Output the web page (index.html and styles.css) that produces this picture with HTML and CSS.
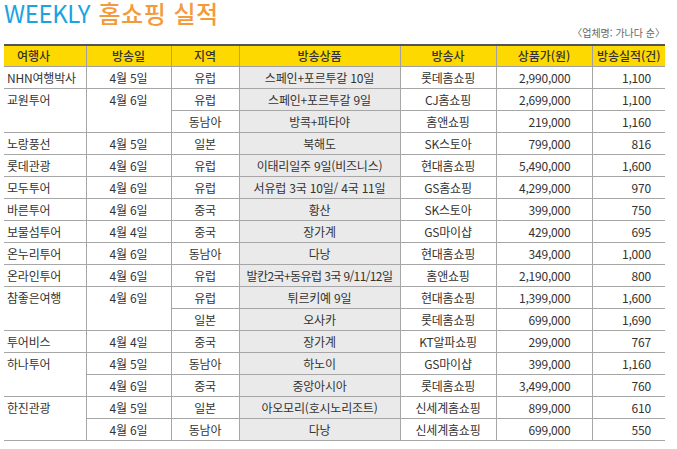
FILE: index.html
```html
<!DOCTYPE html>
<html lang="ko">
<head>
<meta charset="utf-8">
<link rel="stylesheet" href="styles.css">
</head>
<body>
<div class="page">
  <h1 class="title"><span class="en">WEEKLY</span> <span class="ko">홈쇼핑 실적</span></h1>
  <div class="note">〈업체명: 가나다 순〉</div>
  <table class="grid">
    <colgroup>
      <col class="c1"><col class="c2"><col class="c3"><col class="c4"><col class="c5"><col class="c6"><col class="c7">
    </colgroup>
    <thead>
      <tr><th class="agency">여행사</th><th>방송일</th><th>지역</th><th>방송상품</th><th>방송사</th><th>상품가(원)</th><th>방송실적(건)</th></tr>
    </thead>
    <tbody>
      <tr><td class="agency">NHN여행박사</td><td>4월 5일</td><td>유럽</td><td class="prod">스페인+포르투갈 10일</td><td>롯데홈쇼핑</td><td class="price">2,990,000</td><td class="cnt">1,100</td></tr>
      <tr><td class="agency" rowspan="2">교원투어</td><td rowspan="2">4월 6일</td><td>유럽</td><td class="prod">스페인+포르투갈 9일</td><td>CJ홈쇼핑</td><td class="price">2,699,000</td><td class="cnt">1,100</td></tr>
      <tr><td>동남아</td><td class="prod">방콕+파타야</td><td>홈앤쇼핑</td><td class="price">219,000</td><td class="cnt">1,160</td></tr>
      <tr><td class="agency">노랑풍선</td><td>4월 5일</td><td>일본</td><td class="prod">북해도</td><td>SK스토아</td><td class="price">799,000</td><td class="cnt">816</td></tr>
      <tr><td class="agency">롯데관광</td><td>4월 6일</td><td>유럽</td><td class="prod">이태리일주 9일(비즈니스)</td><td>현대홈쇼핑</td><td class="price">5,490,000</td><td class="cnt">1,600</td></tr>
      <tr><td class="agency">모두투어</td><td>4월 6일</td><td>유럽</td><td class="prod">서유럽 3국 10일/ 4국 11일</td><td>GS홈쇼핑</td><td class="price">4,299,000</td><td class="cnt">970</td></tr>
      <tr><td class="agency">바른투어</td><td>4월 6일</td><td>중국</td><td class="prod">황산</td><td>SK스토아</td><td class="price">399,000</td><td class="cnt">750</td></tr>
      <tr><td class="agency">보물섬투어</td><td>4월 4일</td><td>중국</td><td class="prod">장가계</td><td>GS마이샵</td><td class="price">429,000</td><td class="cnt">695</td></tr>
      <tr><td class="agency">온누리투어</td><td>4월 6일</td><td>동남아</td><td class="prod">다낭</td><td>현대홈쇼핑</td><td class="price">349,000</td><td class="cnt">1,000</td></tr>
      <tr><td class="agency">온라인투어</td><td>4월 6일</td><td>유럽</td><td class="prod tight">발칸2국+동유럽 3국 9/11/12일</td><td>홈앤쇼핑</td><td class="price">2,190,000</td><td class="cnt">800</td></tr>
      <tr><td class="agency" rowspan="2">참좋은여행</td><td rowspan="2">4월 6일</td><td>유럽</td><td class="prod">튀르키예 9일</td><td>현대홈쇼핑</td><td class="price">1,399,000</td><td class="cnt">1,600</td></tr>
      <tr><td>일본</td><td class="prod">오사카</td><td>롯데홈쇼핑</td><td class="price">699,000</td><td class="cnt">1,690</td></tr>
      <tr><td class="agency">투어비스</td><td>4월 4일</td><td>중국</td><td class="prod">장가계</td><td>KT알파쇼핑</td><td class="price">299,000</td><td class="cnt">767</td></tr>
      <tr><td class="agency" rowspan="2">하나투어</td><td>4월 5일</td><td>동남아</td><td class="prod">하노이</td><td>GS마이샵</td><td class="price">399,000</td><td class="cnt">1,160</td></tr>
      <tr><td>4월 6일</td><td>중국</td><td class="prod">중앙아시아</td><td>롯데홈쇼핑</td><td class="price">3,499,000</td><td class="cnt">760</td></tr>
      <tr><td class="agency" rowspan="2">한진관광</td><td>4월 5일</td><td>일본</td><td class="prod">아오모리(호시노리조트)</td><td>신세계홈쇼핑</td><td class="price">899,000</td><td class="cnt">610</td></tr>
      <tr><td>4월 6일</td><td>동남아</td><td class="prod">다낭</td><td>신세계홈쇼핑</td><td class="price">699,000</td><td class="cnt">550</td></tr>
    </tbody>
  </table>
</div>
</body>
</html>
```

FILE: styles.css
```css
html, body {
  margin: 0;
  padding: 0;
  background: #ffffff;
}
body {
  font-family: "Noto Sans CJK KR", "Noto Sans", sans-serif;
  color: #333333;
}
.page {
  padding: 0 12px 0 4px;
}
.title {
  margin: 0;
  font-size: 24px;
  line-height: 26px;
  height: 24px;
  font-weight: 400;
  letter-spacing: -0.4px;
  white-space: nowrap;
}
.title .en {
  color: #1ba3df;
}
.title .ko {
  color: #f39a3c;
  font-weight: 500;
  margin-left: 2px;
  letter-spacing: 0.5px;
}
.note {
  margin-top: 2px;
  margin-bottom: 4px;
  text-align: right;
  font-size: 10px;
  line-height: 14px;
  color: #666666;
}
.grid {
  width: 661px;
  border-collapse: collapse;
  table-layout: fixed;
  font-size: 12px;
}
.c1 { width: 82px; }
.c2 { width: 85px; }
.c3 { width: 68px; }
.c4 { width: 161px; }
.c5 { width: 96px; }
.c6 { width: 96px; }
.c7 { width: 73px; }
.grid th {
  background: #fdd900;
  border-top: 2px solid #555555;
  border-left: 1px solid #a0a0a0;
  border-bottom: 1px solid #a0a0a0;
  font-weight: 500;
  color: #333333;
  line-height: 20px;
  padding: 0;
  text-align: center;
}
.grid td {
  border-left: 1px solid #a6a6a6;
  border-bottom: 1px solid #a6a6a6;
  line-height: 21px;
  padding: 0;
  text-align: center;
  vertical-align: top;
  white-space: nowrap;
  letter-spacing: -0.2px;
}
.grid th:first-child,
.grid td.agency {
  border-left: none;
}
.grid th.agency {
  text-align: left;
  padding-left: 13px;
}
.grid td.agency {
  text-align: left;
  padding-left: 3px;
}
.grid td.prod {
  background: #eaeaea;
}
.grid td.tight {
  letter-spacing: -0.6px;
}
.grid td.price {
  text-align: right;
  padding-right: 21px;
}
.grid td.cnt {
  text-align: right;
  padding-right: 14px;
}
```
